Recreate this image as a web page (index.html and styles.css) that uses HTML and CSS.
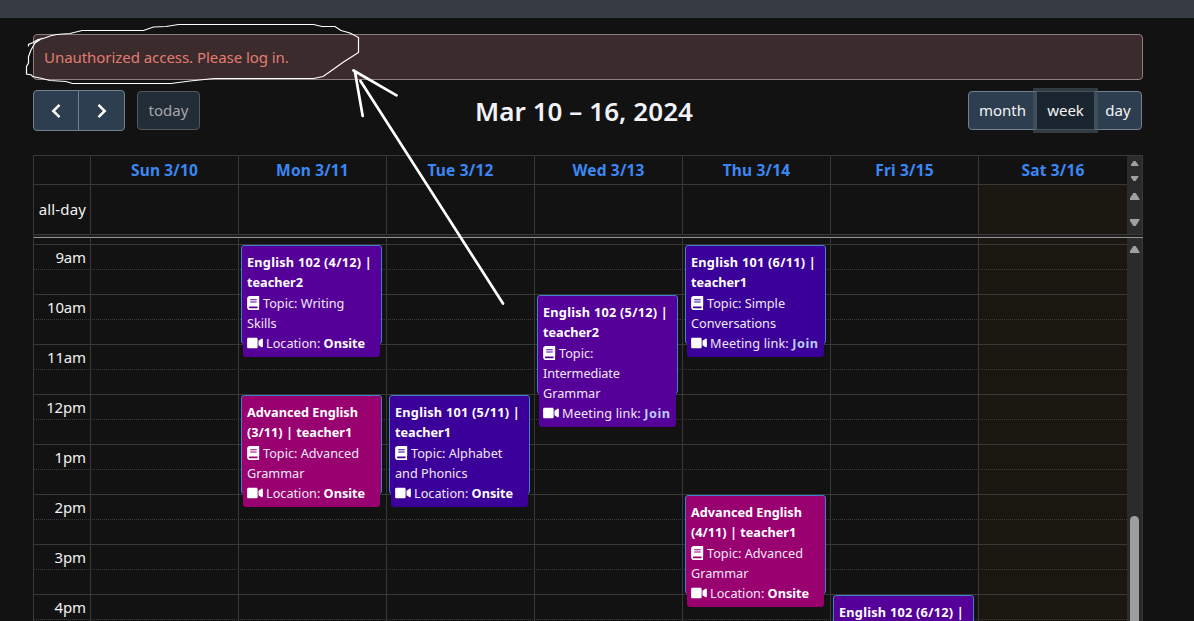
FILE: index.html
```html
<!DOCTYPE html>
<html lang="en">
<head>
<meta charset="utf-8">
<title>Class calendar</title>
<link rel="stylesheet" href="styles.css">
</head>
<body>
<svg width="0" height="0" class="defs">
  <symbol id="book" viewBox="0 0 448 512"><path d="M448 360V24c0-13.3-10.7-24-24-24H96C43 0 0 43 0 96v320c0 53 43 96 96 96h328c13.3 0 24-10.700 24-24v-16c0-7.500-3.500-14.300-8.900-18.700-4.200-15.400-4.200-59.300 0-74.700 5.400-4.300 8.900-11.100 8.900-18.600zM118 118h226c4 0 6 3 6 6v28c0 4-2 6-6 6H118c-4 0-6-2-6-6v-28c0-4 2-6 6-6zm0 80h226c4 0 6 3 6 6v28c0 4-2 6-6 6H118c-4 0-6-2-6-6v-28c0-4 2-6 6-6zM381.400 448H96c-17.700 0-32-14.300-32-32 0-17.600 14.400-32 32-32h285.400c-1.900 17.100-1.900 46.900 0 64z"/></symbol>
  <symbol id="video" viewBox="0 0 576 512"><path d="M336.200 64H47.800C21.400 64 0 85.400 0 111.800v288.400C0 426.600 21.400 448 47.800 448h288.400c26.400 0 47.800-21.400 47.800-47.800V111.800c0-26.400-21.400-47.800-47.800-47.800zm189.400 37.700L416 177.300v157.400l109.600 75.500c21.200 14.600 50.400-.3 50.400-25.800V127.500c0-25.400-29.100-40.400-50.400-25.800z"/></symbol>
</svg>

<div class="navbar"></div>
<main class="container">
  <div class="alert">Unauthorized access. Please log in.</div>

  <div class="toolbar">
    <div class="toolbar-left">
      <div class="group nav-group">
        <button class="btn"><svg width="12" height="16" viewBox="0 0 12 16"><path d="M9.500 1.800 3.300 8l6.200 6.200"/></svg></button>
        <button class="btn"><svg width="12" height="16" viewBox="0 0 12 16"><path d="M2.500 1.800 8.700 8l-6.200 6.200"/></svg></button>
      </div>
      <button class="btn today">today</button>
    </div>
    <h2>Mar 10 – 16, 2024</h2>
    <div class="group view-group">
      <button class="btn month">month</button>
      <button class="btn week">week</button>
      <button class="btn day">day</button>
    </div>
  </div>

  <div class="calendar">
    <div class="row head">
      <div class="axis"></div>
      <div class="cell">Sun 3/10</div><div class="cell">Mon 3/11</div><div class="cell">Tue 3/12</div><div class="cell">Wed 3/13</div><div class="cell">Thu 3/14</div><div class="cell">Fri 3/15</div><div class="cell last">Sat 3/16</div>
      <div class="scroll head-scroll"><i class="up"></i><i class="down"></i></div>
    </div>
    <div class="row allday">
      <div class="axis">all-day</div>
      <div class="cell"></div><div class="cell"></div><div class="cell"></div><div class="cell"></div><div class="cell"></div><div class="cell"></div><div class="cell last sat"></div>
      <div class="scroll allday-scroll"><i class="up big"></i><i class="down big"></i></div>
    </div>
    <div class="divider"></div>
    <div class="timegrid">
      <div class="row columns">
        <div class="axis"></div>
        <div class="cell"></div>
        <div class="cell">
          <article class="event purple at-9">
            <div class="body">
              <b class="wide">English 102 (4/12) |</b><b>teacher2</b>
              <p><svg class="book"><use href="#book"/></svg>Topic: Writing</p><p>Skills</p>
              <p><svg class="video"><use href="#video"/></svg>Location: <strong>Onsite</strong></p>
            </div>
          </article>
          <article class="event magenta at-12">
            <div class="body">
              <b>Advanced English</b><b>(3/11) | teacher1</b>
              <p><svg class="book"><use href="#book"/></svg>Topic: Advanced</p><p>Grammar</p>
              <p><svg class="video"><use href="#video"/></svg>Location: <strong>Onsite</strong></p>
            </div>
          </article>
        </div>
        <div class="cell">
          <article class="event indigo at-12">
            <div class="body">
              <b class="wide">English 101 (5/11) |</b><b>teacher1</b>
              <p><svg class="book"><use href="#book"/></svg>Topic: Alphabet</p><p>and Phonics</p>
              <p><svg class="video"><use href="#video"/></svg>Location: <strong>Onsite</strong></p>
            </div>
          </article>
        </div>
        <div class="cell">
          <article class="event purple at-10">
            <div class="body">
              <b class="wide">English 102 (5/12) |</b><b>teacher2</b>
              <p><svg class="book"><use href="#book"/></svg>Topic:</p><p class="snug">Intermediate</p><p>Grammar</p>
              <p class="link"><svg class="video"><use href="#video"/></svg>Meeting link: <a>Join</a></p>
            </div>
          </article>
        </div>
        <div class="cell">
          <article class="event indigo at-9">
            <div class="body">
              <b class="wide">English 101 (6/11) |</b><b>teacher1</b>
              <p><svg class="book"><use href="#book"/></svg>Topic: Simple</p><p>Conversations</p>
              <p class="link"><svg class="video"><use href="#video"/></svg>Meeting link: <a>Join</a></p>
            </div>
          </article>
          <article class="event magenta at-14">
            <div class="body">
              <b>Advanced English</b><b>(4/11) | teacher1</b>
              <p><svg class="book"><use href="#book"/></svg>Topic: Advanced</p><p>Grammar</p>
              <p><svg class="video"><use href="#video"/></svg>Location: <strong>Onsite</strong></p>
            </div>
          </article>
        </div>
        <div class="cell">
          <article class="event purple at-16">
            <div class="body"><b class="wide">English 102 (6/12) |</b></div>
          </article>
        </div>
        <div class="cell last sat"></div>
        <div class="scroll body-scroll"><i class="up big"></i><span class="thumb"></span></div>
      </div>
      <div class="slots">
        <div class="hour"><span>9am</span></div>
        <div class="hour"><span>10am</span></div>
        <div class="hour"><span>11am</span></div>
        <div class="hour"><span>12pm</span></div>
        <div class="hour"><span>1pm</span></div>
        <div class="hour"><span>2pm</span></div>
        <div class="hour"><span>3pm</span></div>
        <div class="hour"><span>4pm</span></div>
      </div>
    </div>
  </div>
</main>

<svg class="annotation" width="1194" height="621" viewBox="0 0 1194 621">
  <path class="loop" d="M28.500 46.500V44.500L33 42.500 38 39.500 43.500 38.500 50 36 56.500 34.500 70 33.500 82 30.500H143.500L153.500 27 166 26.500 178.500 24.500H313.500L322 26.500H335L341 30.500 350 33 358.500 37.500V52.500L343.500 62 333 69.500 323 76.500 313.500 78.500H214L190 81 171 83.500H72.500L66 81.500 50 80.500 40 78 32.500 76.500 31.500 75 26.500 74V66.500L28.500 63V56.500L31 50 35 43 42.500 38"/>
  <path class="arrow" d="M396.500 95.300 353.500 70.500M355 72 362.700 116M360.500 81 503 303.500"/>
</svg>
</body>
</html>
```
FILE: styles.css
```css
* { box-sizing: border-box; }
html { overflow: hidden; }
body {
  margin: 0;
  height: 621px;
  overflow: hidden;
  background: #121212;
  color: #f1f1f1;
  font: 15px/24px "Noto Sans", "Open Sans", sans-serif;
}
.defs { position: absolute; }
.navbar { height: 18px; background: #373b44; }
.container { width: 1110px; margin-left: 33px; padding-top: 16px; }

.alert {
  height: 46px;
  padding: 10px;
  border: 1px solid #8f7c7c;
  border-radius: 4px;
  background: #3b2b2c;
  color: #e27c72;
  letter-spacing: -.05px;
}

.toolbar {
  display: grid;
  grid-template-columns: 1fr auto 1fr;
  align-items: center;
  height: 41px;
  margin-top: 10px;
}
.toolbar-left { display: flex; align-items: center; gap: 12px; }
.toolbar h2 { margin: 0; font-size: 26px; font-weight: 600; line-height: 36px; letter-spacing: .07px; color: #f1f3f8; padding: 0 8px 0 0; }
.group { display: flex; }
.btn {
  display: flex;
  align-items: center;
  justify-content: center;
  height: 39px;
  padding: 0 0 2px;
  border: 1px solid #76818e;
  border-radius: 4px;
  background: #2c3e50;
  color: #f4f4f4;
  font: inherit;
}
.btn svg { fill: none; stroke: #fff; stroke-width: 2.5; }
.nav-group .btn { width: 46px; height: 41px; padding: 0; }
.nav-group .btn:first-child { border-radius: 4px 0 0 4px; }
.nav-group .btn:last-child { width: 47px; margin-left: -1px; border-radius: 0 4px 4px 0; }
.today { width: 63px; background: #222d38; border-color: #50575f; color: #a4a7aa; }
.view-group { justify-self: end; margin-right: 1px; letter-spacing: -.1px; }
.month { width: 69px; border-radius: 4px 0 0 4px; }
.week {
  width: 59px;
  margin-left: -1px;
  border-radius: 0;
  border-color: #46505a;
  background: #1a252f;
  box-shadow: 0 0 0 3px rgba(76, 91, 106, .55);
  z-index: 1;
}
.day { width: 48px; margin-left: -1px; border-radius: 0 4px 4px 0; }

.calendar {
  width: 1110px;
  margin-top: 24px;
  border: 1px solid #383838;
  border-bottom: 0;
}
.row { display: flex; }
.axis { width: 56px; flex: none; text-align: right; padding-right: 4px; }
.cell { flex: 1; border-left: 1px solid #383838; position: relative; }
.cell.last { flex: none; width: 149px; }
.sat { background: #1a1710; }
.scroll { width: 15px; flex: none; background: #2b2b2b; display: flex; flex-direction: column; align-items: center; }
.head { height: 29px; border-bottom: 1px solid #383838; }
.head .cell { text-align: center; font-weight: 700; font-size: 15.500px; line-height: 29px; letter-spacing: .17px; color: #3b87f5; }
.head .scroll { height: 29px; }
.allday { height: 49px; }
.allday .axis { line-height: 48px; letter-spacing: .15px; }
.up, .down { flex: none; width: 8px; height: 5px; background: #a0a0a0; clip-path: polygon(38% 0, 62% 0, 100% 85%, 100% 100%, 0 100%, 0 85%); }
.down { transform: scaleY(-1); }
.big { width: 10px; height: 7px; }
.head-scroll { padding-top: 5px; gap: 10px; }
.allday-scroll { padding-top: 8px; gap: 19px; }
.body-scroll { padding-top: 8px; position: relative; overflow: hidden; }
.thumb { flex: none; width: 9px; height: 200px; margin-top: 263px; border-radius: 5px; background: #9e9e9e; }
.divider { height: 4px; margin-right: -1px; background: #1f1f1f; border-top: 1px solid #383838; border-bottom: 1px solid #949494; }

.timegrid { display: grid; height: 383px; overflow: hidden; }
.columns, .slots { grid-area: 1 / 1; }
.columns { height: 383px; }
.slots { position: relative; z-index: 0; padding-top: 6px; margin-right: 15px; }
.hour {
  height: 50px;
  border-top: 1px solid #383838;
  background: repeating-linear-gradient(90deg, #3c3c3c 0 1px, transparent 1px 2px) 0 24px / 100% 1px no-repeat;
}
.hour span { display: block; width: 52px; text-align: right; line-height: 25px; letter-spacing: -.15px; }

.event {
  position: absolute;
  z-index: 1;
  left: 2px;
  width: 141px;
  height: 99px;
  border: 1px solid #3f7fd0;
  border-radius: 3px;
  font-size: 12.700px;
  line-height: 20px;
  white-space: nowrap;
}
.at-9 { top: 7px; }
.at-10 { top: 57px; }
.at-12 { top: 157px; }
.at-14 { top: 257px; }
.at-16 { top: 357px; }
.body { margin: 0 1px; padding: 6px 4px 4px; border-radius: 3px; background: inherit; }
.body b { display: block; color: #fff; }
.body b.wide { letter-spacing: .26px; }
.body p { margin: 0; color: #f0e8f6; }
.body b + p { margin-top: 1px; }
.body .snug { letter-spacing: -.1px; }
.body strong { color: #fff; }
.link { letter-spacing: .13px; }
.link a { color: #b9cbf8; font-weight: 700; letter-spacing: .5px; }
.purple { background: #56009a; }
.magenta { background: #990070; }
.indigo { background: #3b0099; }
.body svg { fill: #fff; vertical-align: -2px; }
.book { width: 12.500px; height: 14px; margin-right: 3.500px; }
.video { width: 16px; height: 14px; margin-right: 3px; }

.annotation { position: absolute; left: 0; top: 0; z-index: 5; fill: none; stroke: #fff; }
.loop { stroke-width: 1.200; }
.arrow { stroke-width: 2.700; stroke-linecap: round; }
```
